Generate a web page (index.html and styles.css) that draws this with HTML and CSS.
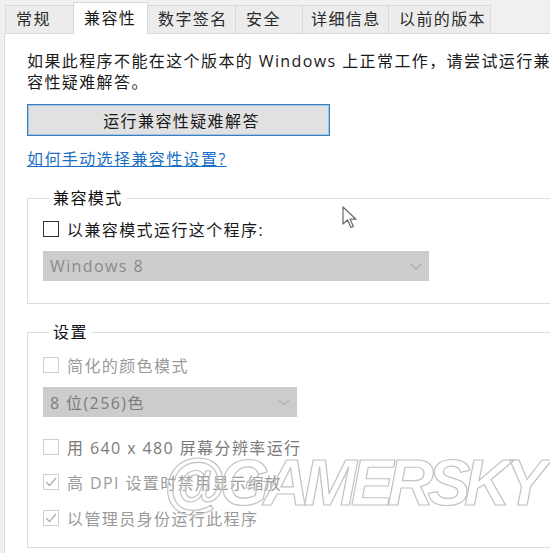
FILE: index.html
```html
<!DOCTYPE html>
<html lang="zh-CN">
<head>
    <meta charset="UTF-8">
    <title>兼容性</title>
    <link rel="stylesheet" href="styles.css">
</head>
<body>
    <div class="dialog">
        <div class="tabs">
            <div class="tab tab-general">常规</div>
            <div class="tab tab-compat active">兼容性</div>
            <div class="tab tab-sign">数字签名</div>
            <div class="tab tab-security">安全</div>
            <div class="tab tab-details">详细信息</div>
            <div class="tab tab-versions">以前的版本</div>
        </div>

        <div class="panel">
            <p class="intro">如果此程序不能在这个版本的 Windows 上正常工作，请尝试运行兼<br>容性疑难解答。</p>
            <button class="troubleshoot">运行兼容性疑难解答</button>
            <a class="help-link" href="#">如何手动选择兼容性设置?</a>

            <fieldset class="group group-mode">
                <legend>兼容模式</legend>
                <label class="check-row">
                    <span class="box"></span>
                    <span>以兼容模式运行这个程序:</span>
                </label>
                <div class="select select-os">
                    <span>Windows 8</span>
                    <svg class="chevron" width="12" height="7" viewBox="0 0 12 7"><polyline points="1,1 6,6 11,1" fill="none" stroke="#a9a9a9" stroke-width="1.2"/></svg>
                </div>
            </fieldset>

            <fieldset class="group group-settings">
                <legend>设置</legend>
                <label class="check-row disabled">
                    <span class="box"></span>
                    <span>简化的颜色模式</span>
                </label>
                <div class="select select-color">
                    <span>8 位(256)色</span>
                    <svg class="chevron" width="12" height="7" viewBox="0 0 12 7"><polyline points="1,1 6,6 11,1" fill="none" stroke="#b4b4b4" stroke-width="1.2"/></svg>
                </div>
                <label class="check-row disabled row-640">
                    <span class="box"></span>
                    <span class="dim">用 640 x 480 屏幕分辨率运行</span>
                </label>
                <label class="check-row disabled row-dpi">
                    <span class="box"><svg width="14" height="14" viewBox="0 0 14 14"><polyline points="2,7 5.5,10.5 12,3" fill="none" stroke="#b0b0b0" stroke-width="1.3"/></svg></span>
                    <span>高 DPI 设置时禁用显示缩放</span>
                </label>
                <label class="check-row disabled row-admin">
                    <span class="box"><svg width="14" height="14" viewBox="0 0 14 14"><polyline points="2,7 5.5,10.5 12,3" fill="none" stroke="#b0b0b0" stroke-width="1.3"/></svg></span>
                    <span>以管理员身份运行此程序</span>
                </label>
            </fieldset>
        </div>
    </div>

    <div class="watermark">@GAMERSKY</div>

    <svg class="cursor" width="18" height="24" viewBox="0 0 18 24">
        <path d="M1 1 L1 18 L5.5 14 L9 21.5 L11.5 20.5 L8 13.2 L14 13.2 Z" fill="#fff" stroke="#6a6a6a" stroke-width="1.2" stroke-linejoin="round"/>
    </svg>
</body>
</html>
```

FILE: styles.css
```css
* {
    box-sizing: border-box;
    margin: 0;
    padding: 0;
}

body {
    background: #f0f0f0;
    color: #1a1a1a;
    font-family: "Open Sans", "Noto Sans CJK SC", sans-serif;
    font-size: 16px;
    letter-spacing: 1.4px;
    height: 553px;
    overflow: hidden;
    position: relative;
}

.dialog {
    width: 640px;
}

/* tab strip */
.tabs {
    display: flex;
    align-items: flex-end;
    height: 33px;
    padding-left: 5px;
}

.tab {
    height: 28px;
    line-height: 27px;
    padding-left: 10px;
    background: #ececec;
    border: 1px solid #d9d9d9;
    border-bottom: none;
    margin-right: -1px;
    color: #2a2a2a;
}

.tab.active {
    height: 32px;
    line-height: 31px;
    background: #fff;
    position: relative;
    z-index: 1;
    margin-bottom: -1px;
    color: #1a1a1a;
}

.tab-general { width: 69px; }
.tab-compat { width: 75px; }
.tab-sign { width: 89px; }
.tab-security { width: 68px; }
.tab-details { width: 87px; padding-left: 8px; }
.tab-versions { width: 103px; }

/* content */
.panel {
    background: #fff;
    margin-left: 4px;
    border-left: 1px solid #dcdcdc;
    border-top: 1px solid #d9d9d9;
    padding: 17px 0 0 22px;
    height: 530px;
}

.intro {
    line-height: 21px;
    white-space: nowrap;
}

.troubleshoot {
    display: block;
    margin-top: 11px;
    width: 303px;
    height: 32px;
    background: #e1e1e1;
    border: 1px solid #3c7fb8;
    box-shadow: inset 0 0 0 1px #9cc7ea;
    font: inherit;
    letter-spacing: inherit;
    color: #1a1a1a;
    padding-left: 6px;
}

.help-link {
    display: block;
    width: max-content;
    margin-top: 13px;
    line-height: 21px;
    color: #1a6fc4;
    text-decoration: underline;
}

.group {
    margin-top: 18px;
    margin-right: 30px;
    border: 1px solid #dcdcdc;
    padding: 9px 0 22px 15px;
}

.group legend {
    margin-left: 6px;
    padding: 0 4px;
    line-height: 21px;
    color: #111;
}

.group-settings {
    padding-top: 11px;
    padding-bottom: 19px;
}

.check-row {
    display: flex;
    align-items: center;
    gap: 8px;
    height: 21px;
}

.box {
    width: 16px;
    height: 16px;
    border: 1px solid #333;
    background: #fff;
    display: flex;
    align-items: center;
    justify-content: center;
}

.check-row.disabled {
    color: #9a9a9a;
}

.check-row.disabled .box {
    border-color: #cfcfcf;
}

.check-row .dim {
    color: #7a7a7a;
}

.row-640 { margin-top: 19px; }
.row-dpi { margin-top: 14px; }
.row-admin { margin-top: 15px; }

.select {
    display: flex;
    align-items: center;
    justify-content: space-between;
    margin-top: 12px;
    height: 30px;
    padding: 0 7px 0 7px;
    background: #cccccc;
    color: #8a8a8a;
}

.select-os {
    width: 386px;
}

.select-color {
    width: 254px;
    color: #7c7c7c;
}

.chevron {
    flex-shrink: 0;
}

/* overlays */
.watermark {
    position: absolute;
    left: 163px;
    top: 446px;
    font-family: "Liberation Sans", sans-serif;
    font-weight: bold;
    font-style: italic;
    font-size: 64px;
    letter-spacing: -6px;
    color: transparent;
    -webkit-text-stroke: 1.2px #c2c2c2;
    pointer-events: none;
}

.cursor {
    position: absolute;
    left: 342px;
    top: 206px;
}
```
